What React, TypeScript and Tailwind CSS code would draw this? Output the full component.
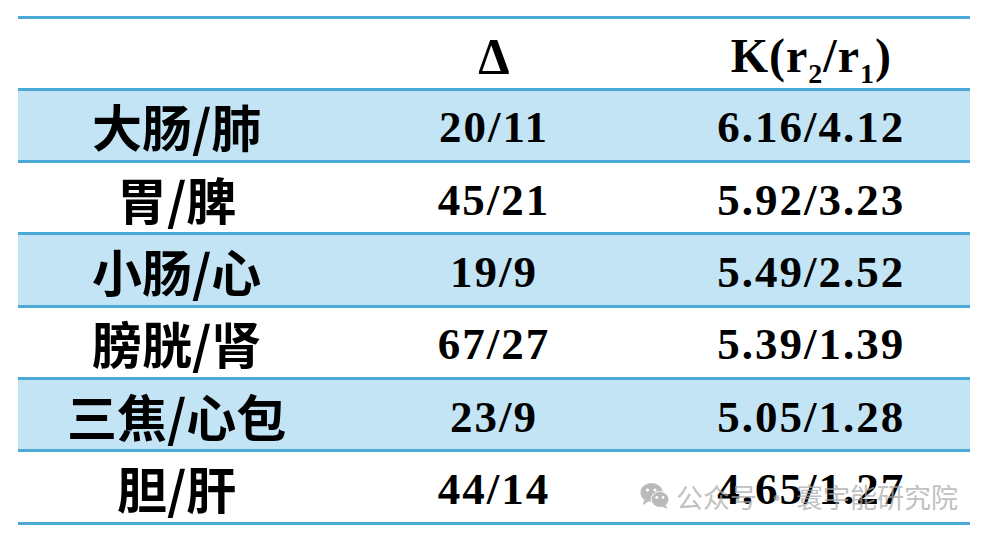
const rows = [
  { organ: '大肠/肺', delta: '20/11', k: '6.16/4.12' },
  { organ: '胃/脾', delta: '45/21', k: '5.92/3.23' },
  { organ: '小肠/心', delta: '19/9', k: '5.49/2.52' },
  { organ: '膀胱/肾', delta: '67/27', k: '5.39/1.39' },
  { organ: '三焦/心包', delta: '23/9', k: '5.05/1.28' },
  { organ: '胆/肝', delta: '44/14', k: '4.65/1.27' },
]

const serif = "font-[family-name:'Liberation_Serif','Times_New_Roman',serif]"
const cjk = "font-[family-name:'Noto_Sans_CJK_SC',sans-serif]"

function WeChatMark() {
  return (
    <svg width="30" height="28" viewBox="0 0 30 28" className="shrink-0">
      <ellipse cx="11.5" cy="10.5" rx="11" ry="9.5" fill="#b3b3b3" />
      <path d="M4 18 L3 23 L8.5 19.5 Z" fill="#b3b3b3" />
      <circle cx="7.5" cy="8" r="1.6" fill="#fff" />
      <circle cx="15" cy="8" r="1.6" fill="#fff" />
      <ellipse cx="20" cy="17.5" rx="9.5" ry="8.3" fill="#fff" />
      <ellipse cx="20" cy="17.5" rx="8.5" ry="7.5" fill="#b3b3b3" />
      <path d="M25.5 23 L27.5 27 L22 24.5 Z" fill="#b3b3b3" />
      <circle cx="16.8" cy="15.5" r="1.4" fill="#fff" />
      <circle cx="23" cy="15.5" r="1.4" fill="#fff" />
    </svg>
  )
}

export default function App() {
  return (
    <div className="relative h-[538px] w-[988px] overflow-hidden bg-white">
      <div className="ml-[18px] mt-[15.5px] w-[952px] border-t-[3px] border-[#4ba9d7]">
        <div className="grid h-[72px] grid-cols-3 items-center border-b-[3px] border-[#4ba9d7] text-black">
          <div />
          <div className={`${serif} pt-[6px] text-center text-[50px] font-bold leading-none`}>Δ</div>
          <div className={`${serif} pt-[6px] text-center text-[48px] font-bold leading-none tracking-[1px]`}>
            K(r<sub className="align-[-0.14em] text-[28px]">2</sub>/r<sub className="align-[-0.14em] text-[28px]">1</sub>)
          </div>
        </div>
        {rows.map((row, i) => (
          <div
            key={row.organ}
            className={`grid h-[72.4px] grid-cols-3 items-center border-b-[3px] border-[#4ba9d7] text-black ${
              i % 2 === 0 ? 'bg-[#c2e4f4]' : 'bg-white'
            }`}
          >
            <div className={`${cjk} text-center text-[50px] font-bold leading-none`}>{row.organ}</div>
            <div className={`${serif} pt-[5px] text-center text-[45px] font-bold leading-none tracking-[2px]`}>
              {row.delta}
            </div>
            <div className={`${serif} pt-[5px] text-center text-[45px] font-bold leading-none tracking-[2px]`}>
              {row.k}
            </div>
          </div>
        ))}
      </div>
      <div className="pointer-events-none absolute left-[640px] top-[482px] flex items-center gap-[6px] opacity-90">
        <WeChatMark />
        <span className={`${cjk} text-[27px] leading-none text-[#a8a8a8]/80`}>公众号 · 寰宇能研究院</span>
      </div>
    </div>
  )
}
